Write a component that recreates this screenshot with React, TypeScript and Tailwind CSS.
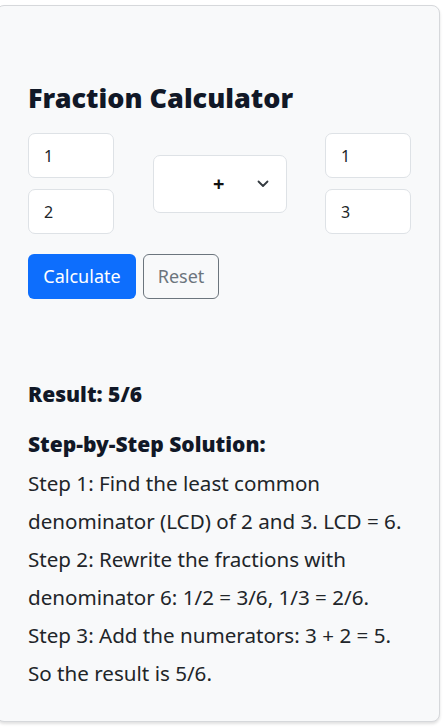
import React from "react";

export default function App() {
  const font = { fontFamily: '"Segoe UI", "Noto Sans", "Open Sans", sans-serif' };
  const heavy = { fontFamily: '"Noto Sans", "Open Sans", sans-serif' };
  return (
    <div className="w-[446px] h-[728px] bg-white overflow-hidden" style={font}>
      <div className="-ml-[4px] mt-[5px] w-[444px] h-[717px] bg-[#f8f9fa] border border-[#d6d8db] rounded-[8px] shadow-[0_2px_3px_rgba(0,0,0,0.12)] pl-[31px] pr-[20px] pt-[76px]">
        <h1 className="text-[27px] leading-[31px] font-black text-[#111827]" style={heavy}>Fraction Calculator</h1>
        <div className="mt-[20px] flex items-center">
          <div className="flex flex-col gap-[11px] shrink-0">
            <div className="w-[86px] h-[45px] bg-white border border-[#dee2e6] rounded-[7px] flex items-center pl-[15px] text-[16px] text-[#212529]">1</div>
            <div className="w-[86px] h-[45px] bg-white border border-[#dee2e6] rounded-[7px] flex items-center pl-[15px] text-[16px] text-[#212529]">2</div>
          </div>
          <div className="ml-[39px] shrink-0 w-[134px] h-[58px] bg-white border border-[#dee2e6] rounded-[7px] relative flex items-center">
            <span className="absolute left-[59px] top-[16px] text-[20px] font-bold leading-[24px] text-[#111]">+</span>
            <svg className="absolute left-[103px] top-[24px]" width="12" height="8" viewBox="0 0 12 8">
              <path d="M1.5 1.5 L6 6 L10.5 1.5" fill="none" stroke="#343a40" strokeWidth="1.8" strokeLinecap="round" strokeLinejoin="round" />
            </svg>
          </div>
          <div className="ml-[38px] shrink-0 flex flex-col gap-[11px]">
            <div className="w-[86px] h-[45px] bg-white border border-[#dee2e6] rounded-[7px] flex items-center pl-[15px] text-[16px] text-[#212529]">1</div>
            <div className="w-[86px] h-[45px] bg-white border border-[#dee2e6] rounded-[7px] flex items-center pl-[15px] text-[16px] text-[#212529]">3</div>
          </div>
        </div>
        <div className="mt-[20px] flex gap-[7px]">
          <button className="h-[45px] w-[108px] bg-[#0d6efd] text-white text-[18px] rounded-[6px] flex items-center justify-center">Calculate</button>
          <button className="h-[45px] w-[76px] border border-[#6c757d] text-[#6c757d] text-[18px] rounded-[6px] flex items-center justify-center">Reset</button>
        </div>
        <div className="mt-[83px] text-[21px] font-black leading-[24px] text-[#111827]" style={heavy}>Result: 5/6</div>
        <div className="mt-[25px] text-[21px] font-black leading-[26px] text-[#111827]" style={heavy}>Step-by-Step Solution:</div>
        <div className="mt-[7px] text-[20.6px] leading-[38px] text-[#212529] w-[388px]">
          <div>Step 1: Find the least common denominator (LCD) of 2 and 3. LCD = 6.</div>
          <div>Step 2: Rewrite the fractions with denominator 6: 1/2 = 3/6, 1/3 = 2/6.</div>
          <div>Step 3: Add the numerators: 3 + 2 = 5.</div>
          <div>So the result is 5/6.</div>
        </div>
      </div>
    </div>
  );
}
